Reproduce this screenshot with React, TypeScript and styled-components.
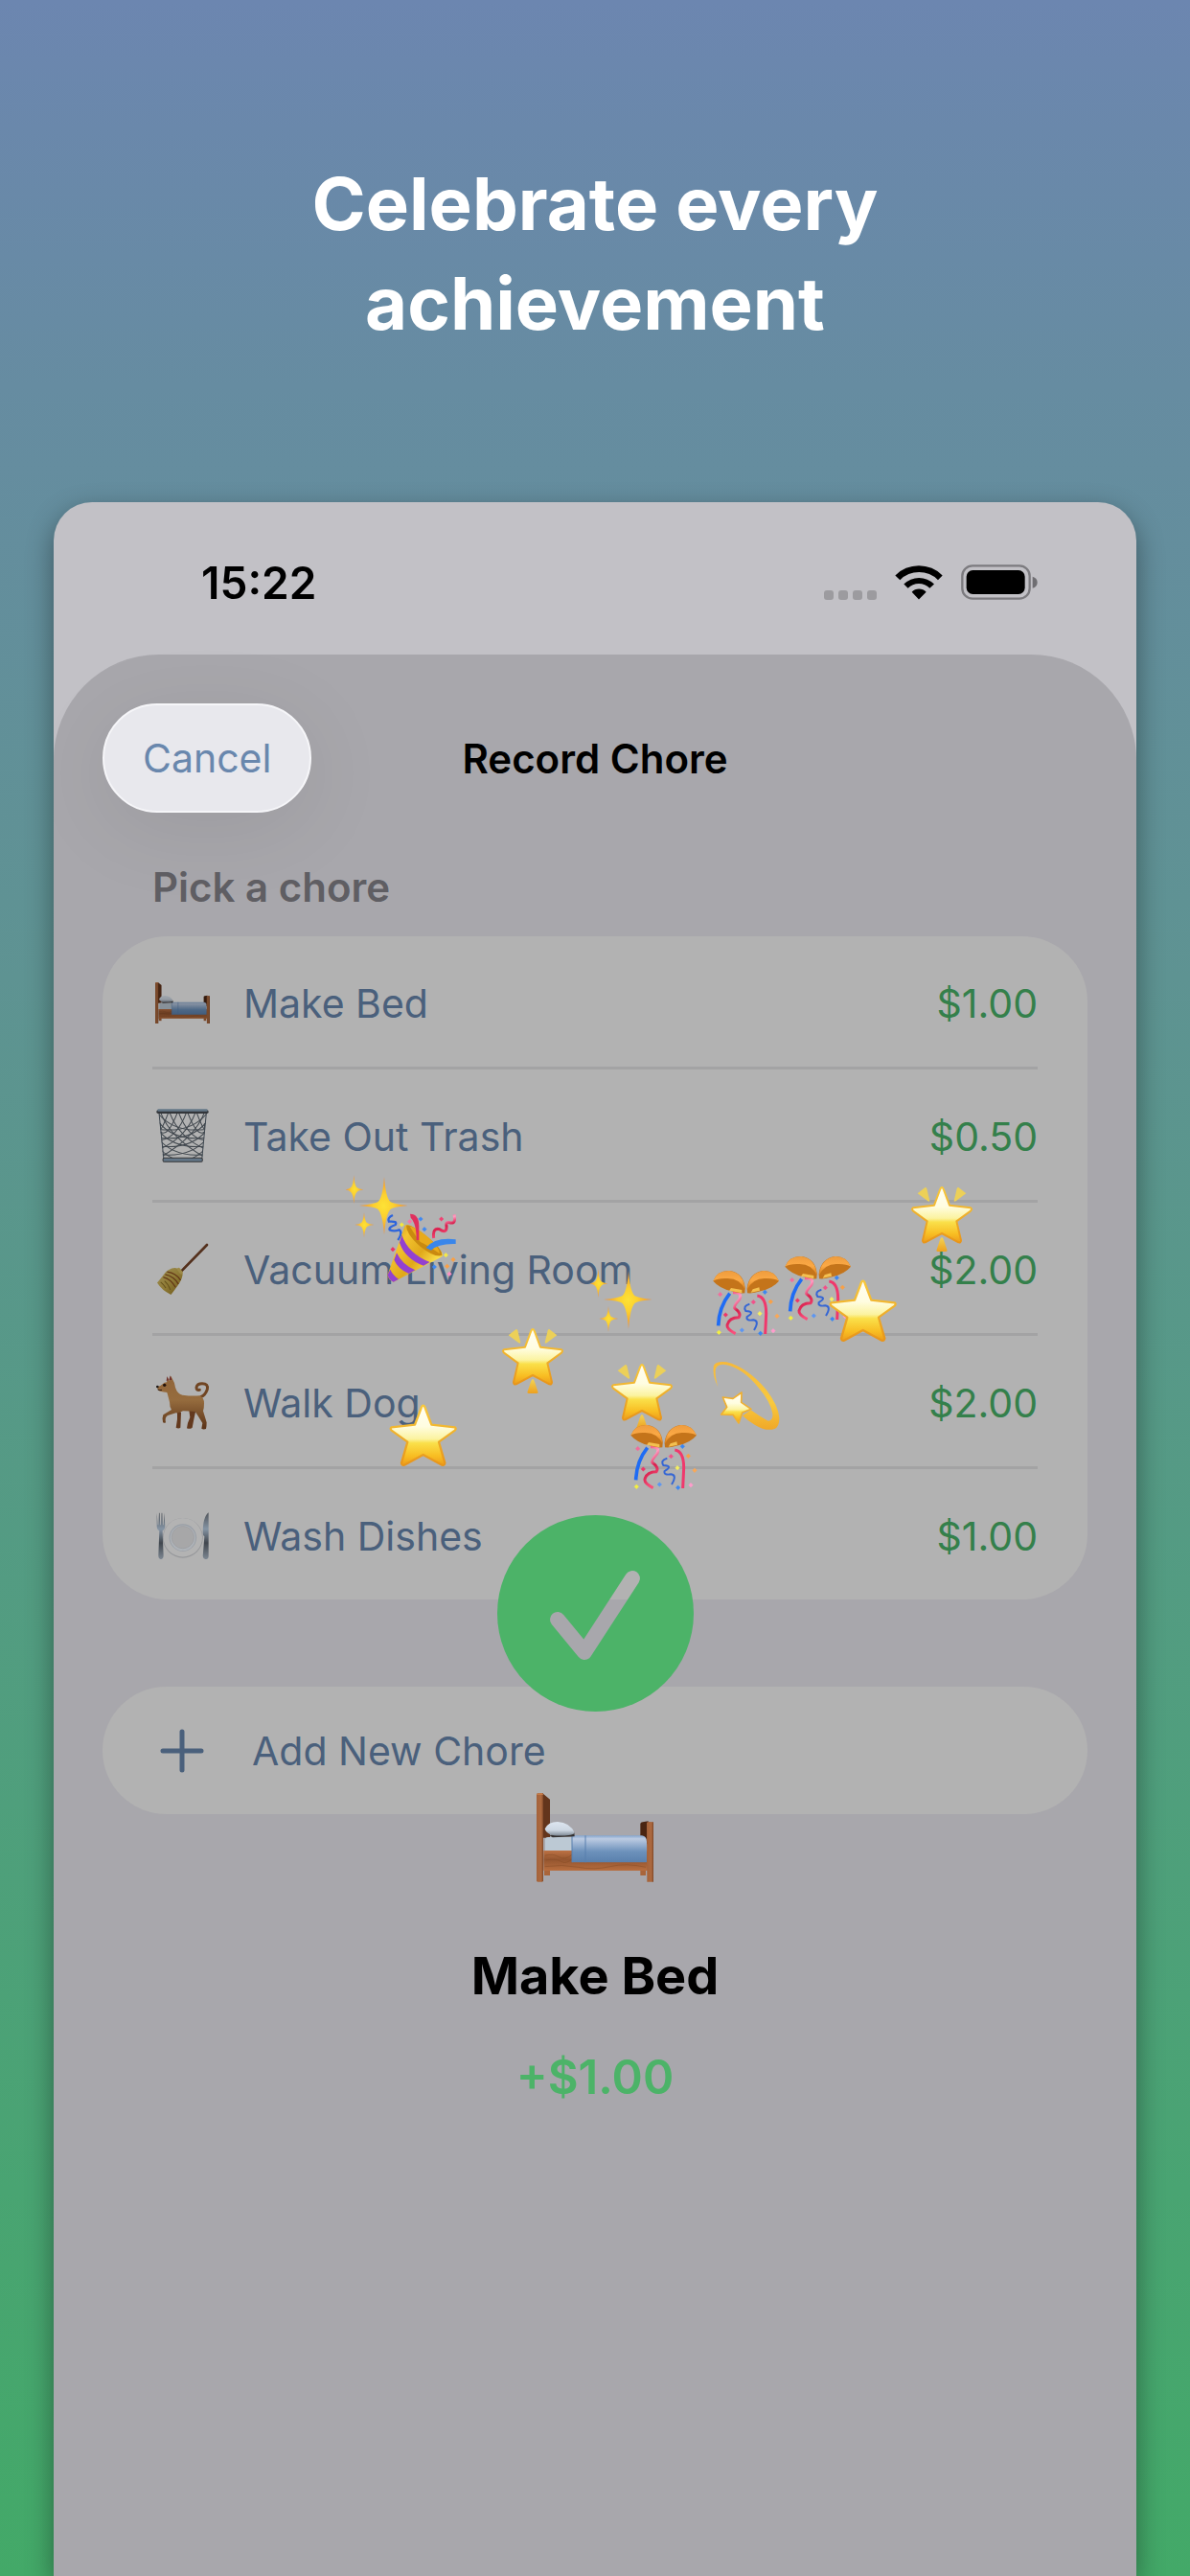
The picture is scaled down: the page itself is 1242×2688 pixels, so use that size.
import React from 'react';
import styled, { createGlobalStyle } from 'styled-components';

const GlobalStyle = createGlobalStyle`
  *, *::before, *::after { box-sizing: border-box; }
  body {
    margin: 0;
    font-family: Inter, "Liberation Sans", sans-serif;
    -webkit-font-smoothing: antialiased;
  }
  h1, h2, h3, p, ul { margin: 0; padding: 0; }
  ul { list-style: none; }
  button { font: inherit; border: 0; background: none; padding: 0; cursor: pointer; }
  svg { display: block; }
`;

const Page = styled.main`
  display: flex;
  flex-direction: column;
  min-height: 100vh;
  overflow: hidden;
  background: linear-gradient(180deg, #6c86b0 0%, #668ca1 15%, #5e9392 38%, #4f9f7c 70%, #43a968 100%);
`;

const Headline = styled.h1`
  max-width: 800px;
  margin: 160px auto 156px;
  color: #fff;
  font-size: 76px;
  font-weight: 700;
  line-height: 104px;
  text-align: center;
`;

const Phone = styled.section`
  position: relative;
  display: flex;
  flex: 1;
  flex-direction: column;
  margin: 0 56px;
  overflow: hidden;
  border-radius: 40px 40px 0 0;
  background: #c2c1c6;
`;

const PhoneShadow = styled.div`
  display: flex;
  flex: 1;
  flex-direction: column;
  filter: drop-shadow(0 10px 14px rgba(0, 0, 0, 0.4));
`;

const StatusBar = styled.div`
  display: flex;
  align-items: center;
  justify-content: space-between;
  height: 159px;
  padding: 8px 103px 0 154px;
`;

const Clock = styled.time`
  color: #000;
  font-size: 46px;
  font-weight: 600;
  line-height: 52px;
`;

const StatusIcons = styled.div`
  display: flex;
  align-items: flex-end;
  gap: 19px;
`;

const SignalDots = styled.div`
  display: flex;
  gap: 5px;
  span {
    width: 10px;
    height: 10px;
    border-radius: 3px;
    background: #9c9b9f;
  }
`;

const Sheet = styled.div`
  flex: 1;
  padding: 51px 51px 0;
  border-radius: 110px 110px 0 0;
  background: #a8a7ac;
`;

const SheetHeader = styled.header`
  display: grid;
  grid-template-columns: 1fr auto 1fr;
  align-items: center;
`;

const CancelButton = styled.button`
  justify-self: start;
  height: 114px;
  padding: 0 40px;
  border: 2px solid #f6f6f9;
  border-radius: 57px;
  background: #e8e8ed;
  box-shadow: 0 16px 90px rgba(0, 0, 0, 0.08);
  color: #6987ad;
  font-size: 41px;
`;

const SheetTitle = styled.h2`
  padding-top: 2px;
  color: #000;
  font-size: 42px;
  font-weight: 600;
  line-height: 52px;
`;

const SectionLabel = styled.h3`
  margin: 52px 52px 25px;
  color: #5f5e63;
  font-size: 42px;
  font-weight: 600;
  line-height: 52px;
`;

const ChoreList = styled.ul`
  padding: 0 52px;
  border-radius: 68px;
  background: #b2b2b2;
`;

const ChoreItem = styled.li`
  & + & { border-top: 3px solid #a3a3a4; }
`;

const ChoreButton = styled.button`
  display: flex;
  align-items: center;
  width: 100%;
  height: 136px;
  padding-top: 3px;
  color: #4a607c;
  font-size: 41px;
  line-height: 52px;
`;

const ChoreIcon = styled.span`
  display: grid;
  place-items: center;
  width: 63px;
  margin-right: 32px;
  filter: brightness(0.72);
`;

const ChorePrice = styled.span`
  margin-left: auto;
  color: #34804b;
`;

const AddButton = styled.button`
  display: flex;
  align-items: center;
  gap: 50px;
  width: 100%;
  height: 133px;
  margin-top: 91px;
  padding: 0 60px;
  border-radius: 67px;
  background: #b2b2b2;
  color: #4a607c;
  font-size: 41px;
  line-height: 52px;
`;

const Celebration = styled.div`
  position: absolute;
  inset: 0;
  display: flex;
  flex-direction: column;
  align-items: center;
  padding-top: 1057px;
  pointer-events: none;
`;

const RewardIcon = styled.div`
  margin-top: 85px;
`;

const RewardName = styled.h2`
  margin-top: 66px;
  color: #000;
  font-size: 54px;
  font-weight: 700;
  line-height: 64px;
`;

const RewardAmount = styled.p`
  margin-top: 44px;
  color: #4cb368;
  font-size: 49px;
  font-weight: 600;
  line-height: 60px;
`;

const Particle = styled.span<{ $x: number; $y: number }>`
  position: absolute;
  left: calc(50% + ${(p) => p.$x}px);
  top: ${(p) => p.$y}px;
`;

const HiddenDefs = styled.svg`
  position: absolute;
  width: 0;
  height: 0;
`;

const SharedGradients = () => (
  <HiddenDefs aria-hidden="true">
    <defs>
      <linearGradient id="star" x1="0" y1="0" x2="0" y2="1">
        <stop offset="0" stopColor="#fffef4" />
        <stop offset="0.35" stopColor="#fffde0" />
        <stop offset="0.56" stopColor="#fbf3a0" />
        <stop offset="0.63" stopColor="#fae04a" />
        <stop offset="0.85" stopColor="#f8bd22" />
        <stop offset="1" stopColor="#ec9c1c" />
      </linearGradient>
      <linearGradient id="starEdge" x1="0" y1="0" x2="0" y2="1">
        <stop offset="0" stopColor="#f8c83c" />
        <stop offset="0.5" stopColor="#efb02c" />
        <stop offset="1" stopColor="#e8951a" />
      </linearGradient>
      <linearGradient id="beam" x1="0" y1="0" x2="0" y2="1">
        <stop offset="0" stopColor="#f3d455" />
        <stop offset="1" stopColor="#eda01f" />
      </linearGradient>
      <radialGradient id="spark">
        <stop offset="0" stopColor="#fde236" />
        <stop offset="0.4" stopColor="#fcd02f" />
        <stop offset="1" stopColor="#f08a34" />
      </radialGradient>
      <linearGradient id="cone" x1="0" y1="0" x2="1" y2="0.8">
        <stop offset="0" stopColor="#c98a0c" />
        <stop offset="0.3" stopColor="#f3c430" />
        <stop offset="0.6" stopColor="#e0a81a" />
        <stop offset="0.85" stopColor="#fbe04a" />
        <stop offset="1" stopColor="#d9960f" />
      </linearGradient>
      <linearGradient id="dome" x1="0" y1="0" x2="0" y2="1">
        <stop offset="0" stopColor="#ee9c3e" />
        <stop offset="0.5" stopColor="#fba945" />
        <stop offset="1" stopColor="#d67c1a" />
      </linearGradient>
      <linearGradient id="pinkRibbon" x1="0" y1="0" x2="0.3" y2="1">
        <stop offset="0" stopColor="#ef3a66" />
        <stop offset="0.35" stopColor="#ff9cc2" />
        <stop offset="0.6" stopColor="#d81f4c" />
        <stop offset="1" stopColor="#f8507c" />
      </linearGradient>
      <linearGradient id="wood" x1="0" y1="0" x2="1" y2="0">
        <stop offset="0" stopColor="#a4623a" />
        <stop offset="0.7" stopColor="#ad6a40" />
        <stop offset="1" stopColor="#7c4526" />
      </linearGradient>
      <linearGradient id="rail" x1="0" y1="0" x2="0" y2="1">
        <stop offset="0" stopColor="#bd7244" />
        <stop offset="0.45" stopColor="#94552f" />
        <stop offset="1" stopColor="#b86e3f" />
      </linearGradient>
      <linearGradient id="blanket" x1="0" y1="0" x2="0" y2="1">
        <stop offset="0" stopColor="#86a7cf" />
        <stop offset="0.12" stopColor="#bccbe2" />
        <stop offset="0.6" stopColor="#6c91bb" />
        <stop offset="1" stopColor="#5a80ad" />
      </linearGradient>
      <linearGradient id="pillow" x1="0" y1="0" x2="0" y2="1">
        <stop offset="0" stopColor="#dde6f0" />
        <stop offset="0.6" stopColor="#cdd7e2" />
        <stop offset="1" stopColor="#7d8894" />
      </linearGradient>
      <linearGradient id="bristle" x1="0" y1="0" x2="1" y2="1">
        <stop offset="0" stopColor="#dcc878" />
        <stop offset="0.5" stopColor="#c8ac4c" />
        <stop offset="1" stopColor="#957620" />
      </linearGradient>
      <linearGradient id="fur" x1="0" y1="0" x2="0" y2="1">
        <stop offset="0" stopColor="#c98c50" />
        <stop offset="0.45" stopColor="#d09656" />
        <stop offset="1" stopColor="#7c4520" />
      </linearGradient>
      <linearGradient id="steel" x1="0" y1="0" x2="0" y2="1">
        <stop offset="0" stopColor="#6e747c" />
        <stop offset="0.35" stopColor="#b9cee4" />
        <stop offset="0.65" stopColor="#5a626c" />
        <stop offset="1" stopColor="#aebccc" />
      </linearGradient>
      <linearGradient id="comet" x1="0" y1="0" x2="0" y2="1">
        <stop offset="0" stopColor="#f6b93a" />
        <stop offset="0.6" stopColor="#f9c93e" />
        <stop offset="1" stopColor="#f0a828" />
      </linearGradient>
    </defs>
  </HiddenDefs>
);

const Bed = ({ width }: { width: number }) => (
  <svg width={width} viewBox="0 0 366 278" aria-hidden="true">
    <path d="M18 0 L42 20 V140 H18Z" fill="#63351c" />
    <path d="M325 96 Q326 91 332 91 L350 88 V160 H325Z" fill="#4a2512" />
    <rect x="24" y="236" width="18" height="22" fill="#a9653b" />
    <rect x="325" y="236" width="17" height="22" fill="#a9653b" />
    <path d="M27 146 Q27 138 36 138 H120 V184 H27Z" fill="#bcc9d4" />
    <rect x="22" y="180" width="326" height="63" fill="url(#rail)" />
    <path d="M26 196 Q50 188 70 200 T112 192 M30 210 Q60 204 76 214 T112 206 M26 230 Q80 222 130 232 T230 230 T342 232" fill="none" stroke="#8d5029" strokeWidth="2" />
    <path d="M111 133 H330 Q345 136 345 152 V217 H111Z" fill="url(#blanket)" />
    <path d="M111 133 V217 M153 133 V217" stroke="#587fae" strokeWidth="3" />
    <path d="M40 132 L118 122 L119 136 L50 139Z" fill="#33302f" />
    <path d="M26 112 Q36 90 66 90 Q104 92 119 124 Q118 130 106 131 Q60 138 40 128 Q28 122 26 112Z" fill="url(#pillow)" />
    <rect x="0" y="1" width="21" height="277" rx="4" fill="url(#wood)" />
    <path d="M0 6 Q2 0 18 0 L21 6Z" fill="#c47a48" />
    <path d="M345 93 Q346 88 366 91 V278 H346Z" fill="url(#wood)" />
  </svg>
);

const Wastebasket = () => {
  const wires: React.ReactNode[] = [];
  for (let i = 0; i < 5; i++) {
    const y = 14 + i * 26;
    wires.push(<path key={'c' + i} d={`M6 ${y} Q56 ${y + 62} 156 ${y + 50}`} />);
    wires.push(<path key={'d' + i} d={`M158 ${y} Q108 ${y + 62} 8 ${y + 50}`} />);
  }
  for (let i = 0; i < 5; i++) {
    const x = 14 + i * 28;
    wires.push(<path key={'a' + i} d={`M${x} 12 Q${x + 30} 90 150 ${150 - i * 26}`} />);
    wires.push(<path key={'b' + i} d={`M${164 - x} 12 Q${134 - x} 90 14 ${150 - i * 26}`} />);
  }
  return (
    <svg width="55" viewBox="0 0 164 168" aria-hidden="true">
      <clipPath id="basket">
        <path d="M8 12 H157 L143 162 H22Z" />
      </clipPath>
      <g clipPath="url(#basket)" fill="none" stroke="#5b646d" strokeWidth="3">
        {wires}
      </g>
      <path d="M9 14 L24 160 M156 14 L142 160" stroke="#56626e" strokeWidth="3" />
      <rect x="21" y="153" width="123" height="12" rx="5" fill="#88a3bb" stroke="#4b4b4d" strokeWidth="3" />
      <rect x="1" y="4" width="162" height="11" rx="5" fill="#474b50" />
      <rect x="4" y="1" width="156" height="7" rx="3" fill="#8aa5bb" />
    </svg>
  );
};

const Broom = () => (
  <svg width="55" viewBox="0 0 164 164" aria-hidden="true">
    <path d="M80 86 L158 6" stroke="#6f4026" strokeWidth="8" strokeLinecap="round" />
    <path d="M84 78 L158 4" stroke="#93593a" strokeWidth="2" />
    <path d="M38 84 Q58 72 72 82 Q84 90 82 100 Q80 116 66 134 Q56 148 46 161 Q18 148 3 124 Q14 112 24 98 Q30 88 38 84Z" fill="url(#bristle)" />
    <path d="M34 90 Q62 94 76 116 M28 98 Q56 104 69 128 M22 106 Q46 112 60 138" fill="none" stroke="#8a4e20" strokeWidth="4" />
    <path d="M14 122 Q24 130 30 140 M26 118 Q38 128 44 146" fill="none" stroke="#8c7024" strokeWidth="3" />
    <path d="M70 82 L78 92" stroke="#d8be62" strokeWidth="10" strokeLinecap="round" />
  </svg>
);

const Dog = () => (
  <svg width="56" viewBox="0 0 168 172" aria-hidden="true">
    <path d="M103 110 L106 132 Q98 148 96 166 Q105 170 113 164 L118 138 L124 110Z M66 110 L66 138 Q64 152 62 164 Q70 169 76 164 L78 116Z" fill="#8a4f2a" />
    <path d="M140 68 Q154 62 160 44 Q164 26 144 26 Q128 26 126 38 Q126 48 136 46" fill="none" stroke="#9c6030" strokeWidth="9" strokeLinecap="round" />
    <path d="M33 22 L36 6 L41 18 L46 2 L52 14 Q58 22 60 38 Q66 58 82 62 Q112 66 136 64 Q150 70 150 88 Q150 104 147 112 L158 148 Q158 160 156 168 Q148 171 142 167 L145 150 Q132 128 122 114 Q104 112 84 112 Q70 120 62 118 L36 126 Q26 132 30 148 Q24 152 21 146 Q18 134 22 124 L48 108 Q42 100 42 84 Q38 68 34 54 Q24 52 12 50 Q2 46 4 36 Q14 34 20 28 Q26 22 33 22Z" fill="url(#fur)" />
    <path d="M32 18 L34 3 L39 16Z M40 16 L44 1 L49 14Z" fill="#9b4340" />
    <circle cx="4" cy="36" r="4" fill="#25201f" />
    <circle cx="26" cy="31" r="5" fill="#2f1a10" />
    <path d="M5 45 Q12 48 18 46" stroke="#3f2417" strokeWidth="3" fill="none" />
  </svg>
);

const PlateCutlery = () => (
  <svg width="55" viewBox="0 0 166 150" aria-hidden="true">
    <circle cx="84" cy="81" r="63" fill="#d0d2d6" />
    <circle cx="84" cy="79" r="61" fill="#f8f8f9" />
    <circle cx="84" cy="80" r="43" fill="#d4dce6" />
    <circle cx="84" cy="81" r="40" fill="#f2f8ff" />
    <circle cx="84" cy="79" r="35" fill="#e8e8ea" stroke="#dcdee2" strokeWidth="3" />
    <path d="M2 2 V46 Q3 56 10 58 L7 136 Q7 148 15 148 Q23 148 23 136 L20 58 Q27 55 28 46 L26 2 L23 40 H21 L19 2 H17 L15 40 H13 L11 2 H9 L7 40 H5Z" fill="url(#steel)" />
    <path d="M165 1 Q147 14 147 66 Q147 74 152 76 L147 138 Q148 148 156 148 Q165 148 165 138Z" fill="url(#steel)" />
  </svg>
);

const GlyphFrame = ({ children }: { children: React.ReactNode }) => (
  <svg width="72" height="72" viewBox="0 0 216 216" aria-hidden="true">{children}</svg>
);

const Sparkles = () => (
  <GlyphFrame>
    <g fill="url(#spark)">
      <path d="M138 15 Q143 82 158 94 Q170 101 212 105 Q170 109 158 116 Q143 130 138 197 Q133 130 118 116 Q106 109 60 105 Q106 101 118 94 Q133 82 138 15Z" />
      <path d="M43 10 Q45 44 53 49 Q58 53 73 55 Q58 57 53 62 Q45 68 43 99 Q41 68 33 62 Q28 57 17 55 Q28 53 33 49 Q41 44 43 10Z" />
      <path d="M75 126 Q77 154 84 159 Q90 163 106 165 Q90 167 84 171 Q77 178 75 206 Q73 178 66 171 Q60 167 46 165 Q60 163 66 159 Q73 154 75 126Z" />
    </g>
  </GlyphFrame>
);

const Star = () => (
  <GlyphFrame>
    <path
      d="M107 14 Q111 14 114 24 L133 74 L206 82 Q212 86 206 92 L156 128 L175 194 Q174 202 166 200 L107 168 L48 200 Q40 202 39 194 L58 128 L8 92 Q2 86 8 82 L81 74 L100 24 Q103 14 107 14Z"
      fill="url(#star)" stroke="url(#starEdge)" strokeWidth="7" strokeLinejoin="round"
    />
  </GlyphFrame>
);

const GlowingStar = () => (
  <GlyphFrame>
    <path d="M32 31 L56 12 Q60 12 61 16 L70 54 Q69 58 64 55Z M184 31 L160 12 Q156 12 155 16 L146 54 Q147 58 152 55Z" fill="#ecd058" />
    <path d="M108 168 Q111 168 114 176 L125 210 Q124 213 120 213 H96 Q92 213 91 210 L102 176 Q105 168 108 168Z" fill="url(#beam)" />
    <path
      d="M108 12 Q112 13 114 20 L132 68 L198 76 Q204 80 198 86 L154 118 L168 178 Q168 186 160 184 L108 156 L56 184 Q48 186 48 178 L62 118 L18 86 Q12 80 18 76 L84 68 L102 20 Q104 13 108 12Z"
      fill="url(#star)" stroke="url(#starEdge)" strokeWidth="6" strokeLinejoin="round"
    />
  </GlyphFrame>
);

const Dizzy = () => (
  <GlyphFrame>
    <path
      d="M19 82 Q0 44 6 14 Q14 0 46 4 Q110 20 170 90 Q208 140 211 178 Q212 206 196 213 Q170 222 134 200 Q112 188 96 172 L122 154 Q146 172 176 188 Q192 188 190 166 Q184 128 146 84 Q96 22 42 12 Q14 8 11 30 Q10 52 19 82Z"
      fill="url(#comet)"
    />
    <path
      d="M93 99 L92 130 L123 151 L95 162 L84 195 L66 169 L29 168 L47 145 L34 114 L66 118Z"
      fill="url(#star)" stroke="#f0b030" strokeWidth="5" strokeLinejoin="round"
    />
  </GlyphFrame>
);

const Dot = ({ x, y, c }: { x: number; y: number; c: string }) => (
  <path d={`M${x} ${y - 7} L${x + 7} ${y} L${x} ${y + 7} L${x - 7} ${y}Z`} fill={c} stroke={c} strokeWidth="1" strokeLinejoin="round" />
);

const PartyPopper = () => (
  <GlyphFrame>
    <path d="M18 6 Q0 14 6 26 Q34 24 26 36 Q4 44 8 52 Q22 58 38 52 Q50 60 34 84" fill="none" stroke="#2d64dc" strokeWidth="7" />
    <path d="M56 38 Q66 32 84 44 Q140 78 172 124 Q178 134 168 138 L20 215 Q2 208 2 192Z" fill="url(#cone)" />
    <path d="M60 38 Q74 32 118 68 Q174 110 172 132 Q150 140 104 104 Q60 66 60 38Z" fill="#c98a10" />
    <path d="M70 40 Q104 50 138 84 Q166 112 164 126 Q120 96 104 90 Q90 72 70 40Z" fill="#e8aa1c" />
    <path d="M46 68 Q66 126 134 153 L114 164 Q56 142 39 92Z M30 124 Q48 162 88 178 L68 189 Q34 174 22 146Z M10 176 Q18 194 36 206 L20 215 Q4 208 2 192Z" fill="#9341d0" />
    <path d="M72 2 Q100 2 100 40 V84 H92 Q92 30 74 14Z" fill="#e0305e" />
    <path d="M122 108 Q150 74 215 82 V96 Q160 94 138 116Z" fill="#3a86ea" />
    <path d="M146 78 Q142 44 164 50 Q188 66 186 40 Q182 24 200 30 Q216 32 210 4" fill="none" stroke="url(#pinkRibbon)" strokeWidth="9" />
    <Dot x={46} y={36} c="#f4e83c" /><Dot x={71} y={26} c="#f27aa8" /><Dot x={105} y={18} c="#3f88f2" />
    <Dot x={117} y={50} c="#3f88f2" /><Dot x={170} y={18} c="#f04272" /><Dot x={18} y={113} c="#ea3468" />
    <Dot x={184} y={131} c="#f6ea48" /><Dot x={207} y={145} c="#f9a046" /><Dot x={188} y={166} c="#f9a046" />
    <Dot x={148} y={168} c="#3f88f2" /><Dot x={195} y={190} c="#ff8fc4" />
  </GlyphFrame>
);

const ConfettiBall = () => (
  <GlyphFrame>
    <path d="M56 77 Q22 120 20 178" fill="none" stroke="#1f6cf4" strokeWidth="11" />
    <path d="M66 74 Q98 74 86 96 Q66 118 72 124 Q94 140 84 152 Q54 152 48 176 Q46 188 74 203" fill="none" stroke="url(#pinkRibbon)" strokeWidth="9" />
    <path d="M118 110 Q96 116 106 132 Q138 134 110 150 Q106 164 130 160 Q150 162 132 192" fill="none" stroke="#3566d4" strokeWidth="6" />
    <path d="M142 84 Q170 88 170 140 L167 204" fill="none" stroke="#f0386c" strokeWidth="9" />
    <path d="M4 38 Q18 4 56 6 Q100 14 104 60 L103 76 Q84 78 62 70 Q22 60 4 38Z" fill="#c4741a" />
    <path d="M4 38 Q18 4 56 6 Q100 14 104 66 Q88 30 50 30 Q20 28 4 38Z" fill="url(#dome)" />
    <path d="M210 38 Q194 4 160 6 Q116 14 110 60 L111 76 Q130 78 152 70 Q192 60 210 38Z" fill="#c4741a" />
    <path d="M210 38 Q194 4 160 6 Q116 14 110 66 Q128 30 164 30 Q194 28 210 38Z" fill="url(#dome)" />
    <path d="M54 68 L60 60 L94 66 L94 76Z M122 74 L128 64 L148 58 L150 68Z" fill="#f3c050" />
    <Dot x={26} y={80} c="#f26c9c" /><Dot x={43} y={144} c="#ee3668" /><Dot x={130} y={104} c="#f2508a" />
    <Dot x={166} y={73} c="#3a86f2" /><Dot x={184} y={103} c="#f9a046" /><Dot x={150} y={140} c="#f6f060" />
    <Dot x={204} y={148} c="#f9a858" /><Dot x={22} y={199} c="#f4f040" /><Dot x={94} y={192} c="#5c96f2" />
    <Dot x={152} y={202} c="#3a86f2" /><Dot x={192} y={194} c="#ff9ccc" />
  </GlyphFrame>
);

const WifiIcon = () => (
  <svg width="50" height="37" viewBox="338 84 150 110" role="img" aria-label="Wi-Fi">
    <path d="M339 118 A104 104 0 0 1 487 118 L473 132 A84 84 0 0 0 354 132Z M366 145 A67 67 0 0 1 461 145 L447 158 A47 47 0 0 0 379 158Z M391 170 A31 31 0 0 1 436 170 L413 193Z" />
  </svg>
);

const BatteryIcon = () => (
  <svg width="80" height="37" viewBox="547 84 240 111" role="img" aria-label="Battery full">
    <rect x="551" y="88" width="211" height="103" rx="32" fill="none" stroke="#7c7b7f" strokeWidth="7" />
    <rect x="564" y="102" width="183" height="75" rx="20" />
    <path d="M771 122 Q786 126 786 140 Q786 154 771 158Z" fill="#6f6e72" />
  </svg>
);

const SuccessBadge = () => (
  <svg width="205" height="205" viewBox="0 0 205 205" role="img" aria-label="Completed">
    <mask id="tick">
      <rect width="205" height="205" fill="#fff" />
      <path d="M63 109 L91 143 L141 66" fill="none" stroke="#000" strokeWidth="16" strokeLinecap="round" strokeLinejoin="round" />
    </mask>
    <circle cx="102.5" cy="102.5" r="102.5" fill="#4cb368" mask="url(#tick)" />
  </svg>
);

const chores = [
  { name: 'Make Bed', price: '$1.00', icon: <Bed width={57} /> },
  { name: 'Take Out Trash', price: '$0.50', icon: <Wastebasket /> },
  { name: 'Vacuum Living Room', price: '$2.00', icon: <Broom /> },
  { name: 'Walk Dog', price: '$2.00', icon: <Dog /> },
  { name: 'Wash Dishes', price: '$1.00', icon: <PlateCutlery /> },
];

const particles = [
  { x: -266, y: 699, glyph: <Sparkles /> },
  { x: -217, y: 742, glyph: <PartyPopper /> },
  { x: -11, y: 797, glyph: <Sparkles /> },
  { x: -101, y: 859, glyph: <GlowingStar /> },
  { x: 13, y: 896, glyph: <GlowingStar /> },
  { x: 326, y: 711, glyph: <GlowingStar /> },
  { x: -215, y: 938, glyph: <Star /> },
  { x: 122, y: 800, glyph: <ConfettiBall /> },
  { x: 197, y: 785, glyph: <ConfettiBall /> },
  { x: 36, y: 961, glyph: <ConfettiBall /> },
  { x: 244, y: 808, glyph: <Star /> },
  { x: 122, y: 896, glyph: <Dizzy /> },
];

export default function App() {
  return (
    <Page>
      <GlobalStyle />
      <SharedGradients />
      <Headline>Celebrate every achievement</Headline>
      <PhoneShadow>
        <Phone>
          <StatusBar>
            <Clock>15:22</Clock>
            <StatusIcons>
              <SignalDots><span /><span /><span /><span /></SignalDots>
              <WifiIcon />
              <BatteryIcon />
            </StatusIcons>
          </StatusBar>
          <Sheet>
            <SheetHeader>
              <CancelButton type="button">Cancel</CancelButton>
              <SheetTitle>Record Chore</SheetTitle>
            </SheetHeader>
            <SectionLabel>Pick a chore</SectionLabel>
            <ChoreList>
              {chores.map((chore) => (
                <ChoreItem key={chore.name}>
                  <ChoreButton type="button">
                    <ChoreIcon>{chore.icon}</ChoreIcon>
                    <span>{chore.name}</span>
                    <ChorePrice>{chore.price}</ChorePrice>
                  </ChoreButton>
                </ChoreItem>
              ))}
            </ChoreList>
            <AddButton type="button">
              <svg width="46" height="46" viewBox="0 0 46 46" fill="none" stroke="currentColor" strokeWidth="5" strokeLinecap="round" aria-hidden="true">
                <path d="M23 3 V43 M3 23 H43" />
              </svg>
              Add New Chore
            </AddButton>
          </Sheet>
          <Celebration>
            {particles.map((p, i) => (
              <Particle key={i} $x={p.x} $y={p.y}>{p.glyph}</Particle>
            ))}
            <SuccessBadge />
            <RewardIcon><Bed width={122} /></RewardIcon>
            <RewardName>Make Bed</RewardName>
            <RewardAmount>+$1.00</RewardAmount>
          </Celebration>
        </Phone>
      </PhoneShadow>
    </Page>
  );
}
